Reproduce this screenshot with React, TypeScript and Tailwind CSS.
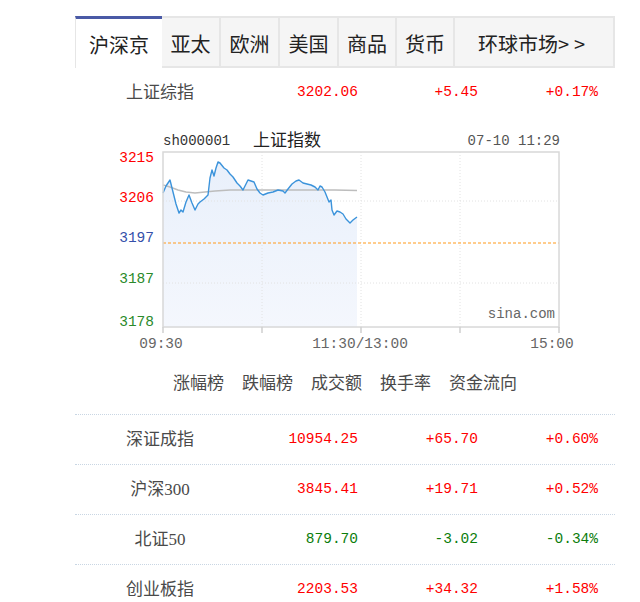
import React from "react";

const TABS = [
  { label: "沪深京", w: "w-[87px]", active: true },
  { label: "亚太", w: "w-[59px]" },
  { label: "欧洲", w: "w-[59px]" },
  { label: "美国", w: "w-[59px]" },
  { label: "商品", w: "w-[58px]" },
  { label: "货币", w: "w-[58px]" },
  { label: "环球市场>>", w: "w-[160px]" },
];

const ROWS = [
  { name: "深证成指", price: "10954.25", chg: "+65.70", pct: "+0.60%", up: true },
  { name: "沪深300", price: "3845.41", chg: "+19.71", pct: "+0.52%", up: true },
  { name: "北证50", price: "879.70", chg: "-3.02", pct: "-0.34%", up: false },
  { name: "创业板指", price: "2203.53", chg: "+34.32", pct: "+1.58%", up: true },
];

const LINKS = ["涨幅榜", "跌幅榜", "成交额", "换手率", "资金流向"];

// price line, page coordinates
const PRICE: [number, number][] = [
  [163, 193], [166, 186], [170, 180], [173, 192], [176, 204], [179, 213], [181, 210],
  [183, 212], [186, 202], [189, 195], [192, 203], [195, 210], [198, 204], [200, 202],
  [204, 199], [208, 195], [210, 178], [212, 170], [214, 176], [216, 168], [218, 162],
  [220, 163], [224, 168], [227, 170], [230, 174], [233, 177], [237, 183], [240, 186],
  [243, 190], [246, 184], [248, 180], [251, 181], [254, 182], [257, 189], [260, 193],
  [263, 195], [268, 193], [273, 192], [278, 190], [283, 191], [285, 193], [288, 189],
  [292, 184], [296, 181], [299, 180], [303, 183], [307, 184], [311, 185], [315, 187],
  [318, 190], [320, 186], [322, 187], [325, 192], [327, 197], [329, 202], [331, 200],
  [332, 210], [334, 215], [337, 211], [340, 212], [343, 214], [346, 219], [350, 223],
  [353, 220], [357, 217],
];

const AVG: [number, number][] = [
  [163, 185], [170, 187], [178, 190], [186, 192], [195, 193], [205, 192], [215, 191],
  [230, 190], [260, 190], [300, 190], [335, 190], [357, 190.5],
];

const pts = (a: [number, number][]) => a.map(([x, y]) => `${x},${y}`).join(" ");

function Chart() {
  const mono = "'Liberation Mono', monospace";
  const area = `M163,327 L${pts(PRICE).replace(/ /g, " L")} L357,327 Z`;
  return (
    <svg width="540" height="244" viewBox="75 116 540 244" className="block">
      <defs>
        <linearGradient id="fillg" x1="0" y1="0" x2="0" y2="1">
          <stop offset="0" stopColor="#e9f0fb" />
          <stop offset="1" stopColor="#f4f7fd" />
        </linearGradient>
      </defs>
      <text x="163" y="145" fontFamily={mono} fontSize="14" fill="#333">sh000001</text>
      <text x="253" y="146" fontFamily="'Noto Sans CJK SC', sans-serif" fontSize="17" fill="#222">上证指数</text>
      <text x="560" y="145" textAnchor="end" fontFamily={mono} fontSize="14" fill="#555">07-10 11:29</text>

      <path d={area} fill="url(#fillg)" />
      {[262, 361, 460].map((x) => (
        <line key={x} x1={x} y1="152" x2={x} y2="327" stroke="#e2e2e2" strokeDasharray="1 2" />
      ))}
      {[201, 283].map((y) => (
        <line key={y} x1="163" y1={y} x2="559" y2={y} stroke="#e2e2e2" strokeDasharray="1 2" />
      ))}
      <line x1="163" y1="243" x2="559" y2="243" stroke="#ff9a1a" strokeWidth="1.2" strokeDasharray="3 2" />
      <polyline points={pts(AVG)} fill="none" stroke="#bdbdbd" strokeWidth="1.5" />
      <polyline points={pts(PRICE)} fill="none" stroke="#3b93db" strokeWidth="1.4" strokeLinejoin="round" />
      <rect x="163" y="152" width="396" height="175" fill="none" stroke="#d8d8d8" strokeWidth="1.5" />
      {[163, 262, 361, 460, 559].map((x) => (
        <line key={x} x1={x} y1="327" x2={x} y2="333" stroke="#cfcfcf" strokeWidth="1.5" />
      ))}

      {[
        ["3215", 157, "#ff0000"],
        ["3206", 197, "#ff0000"],
        ["3197", 237, "#3550aa"],
        ["3187", 278, "#2b8a2b"],
        ["3178", 321, "#2b8a2b"],
      ].map(([t, y, c]) => (
        <text key={t as string} x="154" y={(y as number) + 5} textAnchor="end" fontFamily={mono} fontSize="14.5" fill={c as string}>
          {t}
        </text>
      ))}
      <text x="161" y="348" textAnchor="middle" fontFamily={mono} fontSize="14.5" fill="#666">09:30</text>
      <text x="360" y="348" textAnchor="middle" fontFamily={mono} fontSize="14.5" fill="#666">11:30/13:00</text>
      <text x="552" y="348" textAnchor="middle" fontFamily={mono} fontSize="14.5" fill="#666">15:00</text>
      <text x="555" y="318" textAnchor="end" fontFamily={mono} fontSize="14" fill="#666">sina.com</text>
    </svg>
  );
}

function Row({ name, price, chg, pct, up }: { name: string; price: string; chg: string; pct: string; up: boolean }) {
  const color = up ? "text-[#ff0000]" : "text-[#0b7d0b]";
  return (
    <div className="flex items-center h-full">
      <div className="w-[170px] text-center text-[17px] text-[#4a4a4a] font-['Liberation_Serif','Noto_Sans_CJK_SC',serif]">{name}</div>
      <div className={`w-[113px] text-right ${color}`}>{price}</div>
      <div className={`w-[120px] text-right ${color}`}>{chg}</div>
      <div className={`w-[120px] text-right ${color}`}>{pct}</div>
    </div>
  );
}

export default function App() {
  return (
    <div className="w-[640px] h-[602px] overflow-hidden bg-white pt-[16px] pl-[75px] font-['Liberation_Mono',monospace] text-[14.5px]">
      <div className="w-[540px]">
        <div className="flex h-[52px] font-['Noto_Sans_CJK_SC',sans-serif] text-[20px] text-[#222]">
          {TABS.map((t) =>
            t.active ? (
              <div key={t.label} className={`${t.w} flex items-center justify-center bg-white border-t-[3px] border-t-[#4a5aa6] border-l border-l-[#e6e6e6] pt-[3px]`}>
                {t.label}
              </div>
            ) : (
              <div key={t.label} className={`${t.w} flex items-center justify-center bg-[#f5f5f5] border-2 border-l-0 border-[#e6e6e6] pt-[3px]`}>
                {t.label === "环球市场>>" ? (
                  <span>
                    环球市场<span className="tracking-[5px]">&gt;&gt;</span>
                  </span>
                ) : (
                  t.label
                )}
              </div>
            )
          )}
        </div>
        <div className="h-[48px] pt-[2px]">
          <Row name="上证综指" price="3202.06" chg="+5.45" pct="+0.17%" up />
        </div>
        <Chart />
        <div className="h-[54px] flex justify-center gap-[18px] pt-[9px] text-[17px] text-[#4a4a4a] font-['Noto_Sans_CJK_SC',serif]">
          {LINKS.map((l) => (
            <span key={l}>{l}</span>
          ))}
        </div>
        {ROWS.map((r) => (
          <div key={r.name} className="h-[50px] border-t border-dotted border-[#c9d6e3]">
            <Row {...r} />
          </div>
        ))}
      </div>
    </div>
  );
}
